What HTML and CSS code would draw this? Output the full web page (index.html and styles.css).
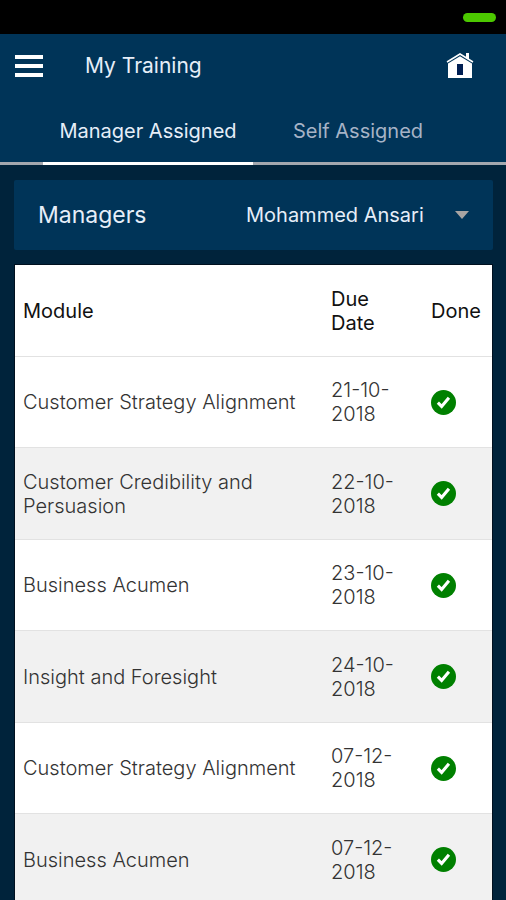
FILE: index.html
```html
<!DOCTYPE html>
<html lang="en">
<head>
<meta charset="utf-8">
<meta name="viewport" content="width=device-width, initial-scale=1">
<title>My Training</title>
<link rel="stylesheet" href="styles.css">
</head>
<body>
<svg class="sprite" aria-hidden="true">
  <symbol id="check" viewBox="0 0 24 24">
    <circle cx="12" cy="12" r="12" fill="#008000"/>
    <path d="M6.600 12.200l3.600 3.600 7-8.300" fill="none" stroke="#fff" stroke-width="3"/>
  </symbol>
</svg>
<div class="app">
  <div class="status"><span class="battery"></span></div>
  <header class="header">
    <div class="bar">
      <button class="icon-button" type="button" aria-label="Menu">
        <svg width="28" height="22" viewBox="0 0 28 22"><path d="M0 2h28M0 11h28M0 20h28" stroke="#fff" stroke-width="4"/></svg>
      </button>
      <h1 class="title">My Training</h1>
      <a class="home" href="#" aria-label="Home">
        <svg width="28" height="26" viewBox="0 0 28 26">
          <path d="M1 9L14 1l13 8" fill="none" stroke="#fff" stroke-width="1.500"/>
          <path d="M20 0h3v7l-3-2z" fill="#fff"/>
          <path d="M2 10.500L14 3.200l12 7.300V25H2z" fill="#fff"/>
          <path d="M11 11h6v11h-6z" fill="#001f52"/>
        </svg>
      </a>
    </div>
    <nav class="tabs">
      <a class="tab active" href="#" aria-current="page">Manager Assigned</a>
      <a class="tab" href="#">Self Assigned</a>
    </nav>
  </header>
  <main class="content">
    <div class="filter">
      <label class="filter-label" for="manager">Managers</label>
      <div class="picker">
        <select id="manager"><option>Mohammed Ansari</option></select>
        <svg class="caret" width="14" height="8" viewBox="0 0 14 8" aria-hidden="true"><path d="M0 0h14L7 8z" fill="#a8a4a2"/></svg>
      </div>
    </div>
    <table class="modules">
      <thead>
        <tr><th class="module">Module</th><th class="date">Due Date</th><th>Done</th></tr>
      </thead>
      <tbody>
        <tr><td>Customer Strategy Alignment</td><td>21-10-<wbr>2018</td><td><svg class="check" role="img" aria-label="Done"><use href="#check"/></svg></td></tr>
        <tr><td>Customer Credibility and Persuasion</td><td>22-10-<wbr>2018</td><td><svg class="check" role="img" aria-label="Done"><use href="#check"/></svg></td></tr>
        <tr><td>Business Acumen</td><td>23-10-<wbr>2018</td><td><svg class="check" role="img" aria-label="Done"><use href="#check"/></svg></td></tr>
        <tr><td>Insight and Foresight</td><td>24-10-<wbr>2018</td><td><svg class="check" role="img" aria-label="Done"><use href="#check"/></svg></td></tr>
        <tr><td>Customer Strategy Alignment</td><td>07-12-<wbr>2018</td><td><svg class="check" role="img" aria-label="Done"><use href="#check"/></svg></td></tr>
        <tr><td>Business Acumen</td><td>07-12-<wbr>2018</td><td><svg class="check" role="img" aria-label="Done"><use href="#check"/></svg></td></tr>
      </tbody>
    </table>
  </main>
</div>
</body>
</html>
```
FILE: styles.css
```css
* { box-sizing: border-box; }

body {
  margin: 0;
  background: #00233b;
  font-family: "Century Gothic", Inter, sans-serif;
  font-size: 20px;
  line-height: 24px;
}

.sprite { position: absolute; width: 0; height: 0; }

.app {
  display: flex;
  flex-direction: column;
  height: 100vh;
}

.status {
  display: flex;
  flex: none;
  align-items: center;
  justify-content: flex-end;
  height: 34px;
  padding-right: 10px;
  background: #000;
}

.battery {
  width: 33px;
  height: 9px;
  border-radius: 5px;
  background: #4cc800;
}

.header {
  flex: none;
  background: #003458;
}

.bar {
  display: flex;
  align-items: center;
  height: 64px;
  padding: 0 32px 0 15px;
}

.icon-button {
  display: flex;
  padding: 0;
  border: 0;
  background: none;
}

.title {
  flex: 1;
  margin: 0 0 0 42px;
  color: #e6eef8;
  font-size: 21px;
  font-weight: 400;
}

.home { display: flex; }

.tabs {
  display: flex;
  height: 67px;
  padding: 0 43px;
  border-bottom: 3px solid #a3a7ae;
}

.tab {
  flex: 1;
  height: 67px;
  padding-top: 21px;
  color: #a6b3c6;
  text-align: center;
  text-decoration: none;
}

.tab.active {
  border-bottom: 3px solid #fff;
  color: #e6eef8;
}

.content {
  flex: 1;
  min-height: 0;
  padding: 15px 13px 0 14px;
  overflow: auto;
  scrollbar-width: none;
}

.filter {
  display: flex;
  align-items: center;
  justify-content: space-between;
  height: 70px;
  margin-bottom: 14px;
  padding: 0 24px;
  border-radius: 2px;
  background: #003458;
}

.filter-label {
  color: #e6eef8;
  font-size: 23px;
}

.picker {
  position: relative;
  display: flex;
  align-items: center;
}

.picker select {
  appearance: none;
  padding: 0 45px 0 0;
  border: 0;
  background: none;
  color: #e6eef8;
  font: inherit;
}

.caret {
  position: absolute;
  right: 0;
  pointer-events: none;
}

.modules {
  width: 100%;
  border: 1px solid #00101f;
  border-bottom: 0;
  border-collapse: separate;
  border-spacing: 0;
  background: #fff;
  color: #333;
}

.modules th,
.modules td {
  height: 91px;
  padding: 0 8px;
  border-bottom: 1px solid #e2e2e2;
  text-align: left;
  vertical-align: middle;
}

.modules th {
  height: 92px;
  color: #111;
  font-weight: 400;
}

.modules th:last-child,
.modules td:last-child { padding-right: 0; }

.modules td { font-weight: 300; }

.modules tbody tr:nth-child(even) td {
  height: 92px;
  background: #f1f1f1;
}

.modules .module { width: 308px; }
.modules .date { width: 100px; }

.check {
  display: block;
  width: 25px;
  height: 25px;
}
```
